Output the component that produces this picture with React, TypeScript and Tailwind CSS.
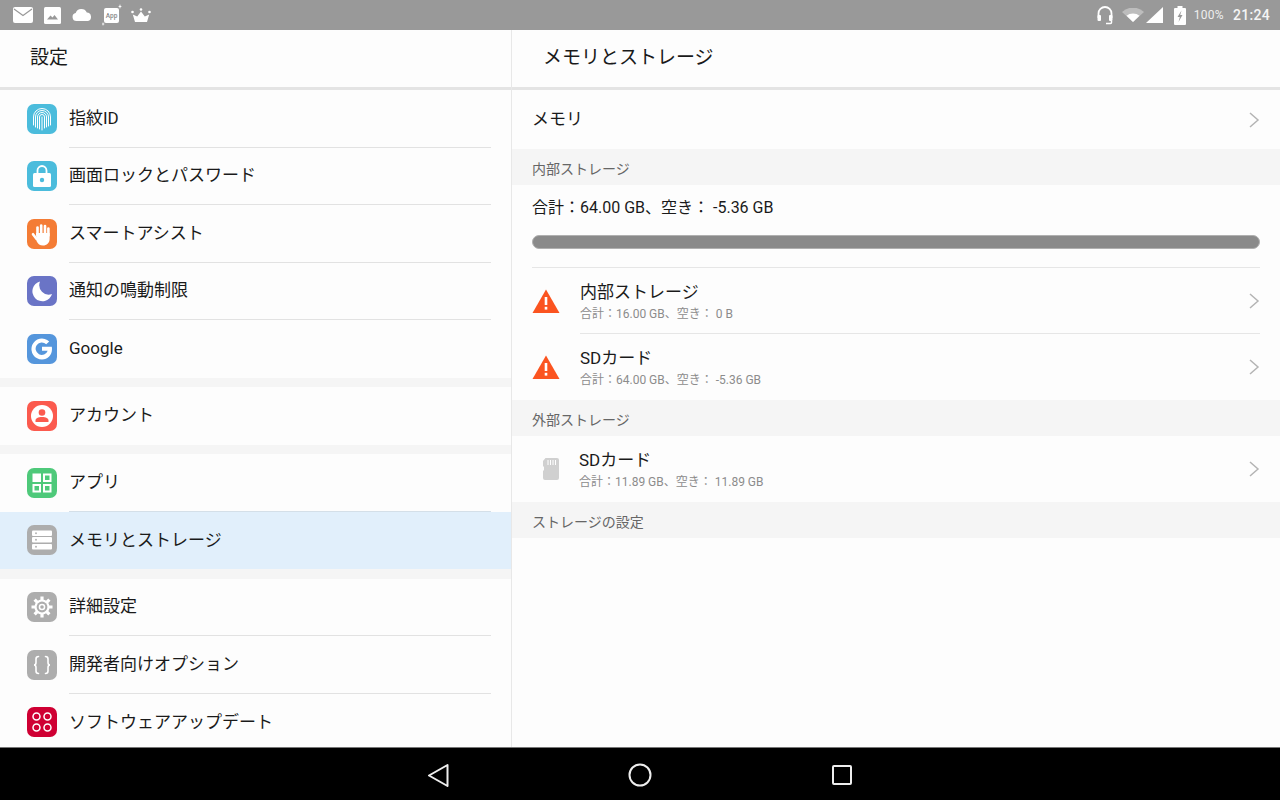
import type { ReactNode } from 'react'

const FONT = '[font-family:Roboto,"Noto_Sans_CJK_JP",sans-serif]'

const Tile = ({ bg, children }: { bg: string; children: ReactNode }) => (
  <div className={`w-[30px] h-[30px] rounded-[7px] shrink-0 ${bg}`}>
    <svg viewBox="0 0 30 30" width="30" height="30">
      {children}
    </svg>
  </div>
)

const Fingerprint = () => (
  <g fill="none" stroke="#fff" strokeWidth="1" strokeLinecap="round">
    <path d="M6.5 21V13a8.5 8.5 0 0 1 17 0v8" />
    <path d="M8.5 23V13a6.5 6.5 0 0 1 13 0v9" />
    <path d="M10.5 24V13a4.5 4.5 0 0 1 9 0v10" />
    <path d="M12.5 25V13a2.5 2.5 0 0 1 5 0v11" />
    <path d="M15 13v13" />
  </g>
)

const Lock = () => (
  <g>
    <path d="M10.5 12V9.5a4.5 4.5 0 0 1 9 0V12" fill="none" stroke="#fff" strokeWidth="1.8" />
    <rect x="6" y="12" width="18" height="14" rx="1.5" fill="#fff" />
    <circle cx="15" cy="19" r="2.2" fill="#4bbcdc" />
  </g>
)

const Hand = () => (
  <g fill="#fff">
    <g stroke="#fff" strokeWidth="2.6" strokeLinecap="round">
      <path d="M10.5 16V8.5" />
      <path d="M14.2 15V6.5" />
      <path d="M18 15V7" />
      <path d="M21.4 16.5V9.5" />
      <path d="M9.6 20L6 15.2" />
    </g>
    <path d="M9 14h13.6v6c0 4-3 6.5-6.6 6.5-3.200 0-5-1.500-6.500-4.500z" />
  </g>
)

const Moon = () => (
  <path d="M13 5.500a10 10 0 1 0 12 12.500 9.500 9.500 0 0 1-12-12.500z" fill="#fff" />
)

const GoogleG = () => (
  <path
    d="M25 15c0 6-4.200 10.500-10 10.500a10.500 10.500 0 1 1 7.200-18.100l-3 2.900a6.200 6.200 0 1 0 1.500 6.400H15v-3.900h9.800c.1.600.2 1.300.2 2.200z"
    fill="#fff"
  />
)

const Person = () => (
  <g>
    <circle cx="15" cy="15" r="11" fill="#fff" />
    <circle cx="15" cy="11.500" r="3.300" fill="#fb5a4e" />
    <path d="M8.500 21v-1.500c0-2 2.500-3.500 6.500-3.500s6.500 1.500 6.500 3.500V21z" fill="#fb5a4e" />
  </g>
)

const Apps = () => (
  <g>
    <rect x="5.500" y="5.500" width="8.500" height="8.500" fill="#fff" />
    <rect x="17" y="6.500" width="6.500" height="6.500" fill="none" stroke="#fff" strokeWidth="2" />
    <rect x="6.500" y="17" width="6.500" height="6.500" fill="none" stroke="#fff" strokeWidth="2" />
    <rect x="17" y="17" width="6.500" height="6.500" fill="none" stroke="#fff" strokeWidth="2" />
  </g>
)

const Server = () => (
  <g>
    {[5.500, 12, 19].map((y) => (
      <g key={y}>
        <rect x="5" y={y} width="20" height="5.500" rx="1" fill="#fff" />
        <circle cx="9" cy={y + 2.750} r="0.900" fill="#adadad" />
      </g>
    ))}
  </g>
)

const Gear = () => (
  <g>
    <g stroke="#fff" strokeWidth="3.200">
      <path d="M15 4.500v21M4.500 15h21M7.600 7.600l14.800 14.800M22.400 7.600L7.600 22.400" />
    </g>
    <circle cx="15" cy="15" r="7.600" fill="#fff" />
    <circle cx="15" cy="15" r="5.400" fill="#adadad" />
    <circle cx="15" cy="15" r="3.300" fill="#fff" />
    <circle cx="15" cy="15" r="1.800" fill="#adadad" />
  </g>
)

const Braces = () => (
  <g fill="none" stroke="#fff" strokeWidth="1.600" strokeLinecap="round">
    <path d="M11.500 6.500c-2 0-2.500.8-2.500 2.500v3.500c0 1.500-.6 2.500-2 2.500 1.400 0 2 1 2 2.500V21c0 1.700.5 2.500 2.500 2.500" />
    <path d="M18.500 6.500c2 0 2.500.8 2.500 2.500v3.500c0 1.500.6 2.500 2 2.500-1.400 0-2 1-2 2.500V21c0 1.700-.5 2.500-2.500 2.500" />
  </g>
)

const Dots = () => (
  <g fill="none" stroke="#fff" strokeWidth="1.500">
    <circle cx="9.500" cy="9.500" r="3.500" />
    <circle cx="20.500" cy="9.500" r="3.500" />
    <circle cx="9.500" cy="20.500" r="3.500" />
    <circle cx="20.500" cy="20.500" r="3.500" />
  </g>
)

type Item = { label: string; bg: string; icon: ReactNode; active?: boolean }

const GROUPS: Item[][] = [
  [
    { label: '指紋ID', bg: 'bg-[#4bbcdc]', icon: <Fingerprint /> },
    { label: '画面ロックとパスワード', bg: 'bg-[#4bbcdc]', icon: <Lock /> },
    { label: 'スマートアシスト', bg: 'bg-[#f47c35]', icon: <Hand /> },
    { label: '通知の鳴動制限', bg: 'bg-[#6a74c6]', icon: <Moon /> },
    { label: 'Google', bg: 'bg-[#5596dc]', icon: <GoogleG /> },
  ],
  [{ label: 'アカウント', bg: 'bg-[#fb5a4e]', icon: <Person /> }],
  [
    { label: 'アプリ', bg: 'bg-[#4ec97a]', icon: <Apps /> },
    { label: 'メモリとストレージ', bg: 'bg-[#adadad]', icon: <Server />, active: true },
  ],
  [
    { label: '詳細設定', bg: 'bg-[#adadad]', icon: <Gear /> },
    { label: '開発者向けオプション', bg: 'bg-[#adadad]', icon: <Braces /> },
    { label: 'ソフトウェアアップデート', bg: 'bg-[#cf0033]', icon: <Dots /> },
  ],
]

const Chevron = () => (
  <svg viewBox="0 0 12 18" width="12" height="18" className="shrink-0">
    <path d="M2 2l8 7-8 7" fill="none" stroke="#b4b4b4" strokeWidth="1.500" />
  </svg>
)

const Warning = () => (
  <svg viewBox="0 0 28 24" width="28" height="24" className="shrink-0">
    <path d="M14 0.500L27.500 24H0.500z" fill="#fb5420" />
    <rect x="12.700" y="8" width="2.600" height="8" fill="#fff" />
    <rect x="12.700" y="17.800" width="2.600" height="2.800" fill="#fff" />
  </svg>
)

const SdCard = () => (
  <svg viewBox="0 0 18 22" width="18" height="22" className="shrink-0">
    <path
      d="M3.500 0H15a2 2 0 0 1 2 2v18a2 2 0 0 1-2 2H3a2 2 0 0 1-2-2v-7l1-1V9L1 8V3z"
      fill="#d0d0d0"
    />
    <path d="M6 2v5M8.500 2v5M11 2v5M13.500 2v5" stroke="#fff" strokeWidth="1" />
  </svg>
)

const SectionLabel = ({ children }: { children: ReactNode }) => (
  <div className="h-9 bg-[#f5f5f5] pl-5 flex items-center text-sm text-[#666] pt-[3px]">{children}</div>
)

const StorageRow = ({
  icon,
  title,
  sub,
  textGap,
  line,
}: {
  icon: ReactNode
  title: string
  sub: string
  textGap: string
  line?: boolean
}) => (
  <div className="h-[66px] pl-5 pr-5 flex items-center relative">
    <div className={`flex items-center flex-1 ${textGap}`}>
      {icon}
      <div>
        <div className="text-[17px] leading-[24px] text-[#1a1a1a]">{title}</div>
        <div className="text-xs leading-[18px] text-[#8c8c8c] mt-[1px]">{sub}</div>
      </div>
    </div>
    <Chevron />
    {line && <div className="absolute left-[68px] right-5 bottom-0 h-px bg-[#e6e6e6]" />}
  </div>
)

export default function App() {
  return (
    <div className={`w-[1280px] h-[800px] flex flex-col overflow-hidden bg-[#fdfdfd] ${FONT}`}>
      {/* status bar */}
      <div className="h-[30px] bg-[#999] flex items-center pl-[13px] pr-[10px] shrink-0">
        <svg viewBox="0 0 20 16" width="20" height="16" className="ml-0">
          <rect width="20" height="16" rx="2" fill="#fff" />
          <path d="M1 2l9 6.500L19 2" fill="none" stroke="#999" strokeWidth="1.200" />
        </svg>
        <svg viewBox="0 0 17 17" width="17" height="17" className="ml-[11px]">
          <rect width="17" height="17" rx="1.500" fill="#fff" />
          <path d="M3 12.500l3.500-4 2 2 2-2.500 3.500 4.500z" fill="#999" />
        </svg>
        <svg viewBox="0 0 20 12" width="20" height="12" className="ml-[11px]">
          <path
            d="M4.500 12a4 4 0 0 1-.8-7.900A6 6 0 0 1 14.800 3.600 4.300 4.300 0 0 1 16 12z"
            fill="#fff"
          />
        </svg>
        <svg viewBox="0 0 20 22" width="20" height="22" className="ml-[10px]">
          <rect x="2" y="4" width="15" height="15" rx="2" fill="#fff" />
          <text x="9.500" y="14" fontSize="6.500" fontWeight="500" textAnchor="middle" fill="#888">
            App
          </text>
          <path d="M18 0l.6 1.900 1.400.6-1.400.6-.6 1.900-.6-1.900-1.400-.6 1.400-.6zM1 18l.5 1.500 1.300.5-1.300.5L1 22l-.5-1.500L0 20l.5-.5z" fill="#fff" />
        </svg>
        <svg viewBox="0 0 20 15" width="20" height="15" className="ml-[9px]">
          <path d="M4 14L1.800 6.500 6.200 8.500 10 3.500l3.800 5 4.400-2L16 14z" fill="#fff" />
          <circle cx="1.500" cy="4" r="1.300" fill="#fff" />
          <circle cx="10" cy="1.500" r="1.300" fill="#fff" />
          <circle cx="18.500" cy="4" r="1.300" fill="#fff" />
        </svg>

        <svg viewBox="0 0 18 20" width="18" height="20" className="ml-auto">
          <path d="M2.500 13V8.500a6.500 6.500 0 0 1 13 0V13" fill="none" stroke="#fff" strokeWidth="1.800" />
          <rect x="1.500" y="10" width="3.500" height="6" rx="1" fill="#fff" />
          <rect x="13" y="10" width="3.500" height="6" rx="1" fill="#fff" />
          <path d="M15.500 16v1.500a1 1 0 0 1-1 1H10" fill="none" stroke="#fff" strokeWidth="1.500" />
        </svg>
        <svg viewBox="0 0 22 14" width="22" height="14" className="ml-[8px]">
          <path d="M0 4a16 16 0 0 1 22 0L11 14z" fill="#bdbdbd" />
          <path d="M4.500 7.800a10 10 0 0 1 13 0L11 14z" fill="#fff" />
        </svg>
        <svg viewBox="0 0 18 16" width="18" height="16" className="ml-[2px]">
          <path d="M17 0v16H0z" fill="#fff" />
        </svg>
        <svg viewBox="0 0 12 19" width="12" height="19" className="ml-[10px]">
          <path d="M3.500 0h5v2H11a1 1 0 0 1 1 1v15a1 1 0 0 1-1 1H1a1 1 0 0 1-1-1V3a1 1 0 0 1 1-1h2.500z" fill="#fff" />
          <path d="M7.500 4.500L3.500 11h2.300L4.500 16l4-7H6.200z" fill="#999" />
        </svg>
        <span className="ml-[8px] text-xs tracking-[0.3px] text-[#eee]">100%</span>
        <span className="ml-[9px] text-sm font-medium tracking-[0.3px] text-[#f5f5f5]">21:24</span>
      </div>

      <div className="flex-1 flex min-h-0">
        {/* settings list */}
        <div className="w-[512px] shrink-0 border-r border-[#e8e8e8] flex flex-col overflow-hidden">
          <div className="h-[60px] shrink-0 border-b-[3px] border-[#e4e4e4] pl-[30px] flex items-center text-[19px] text-[#1a1a1a]">
            設定
          </div>
          <div className="flex flex-col gap-[9.5px] bg-[#f5f5f5]">
            {GROUPS.map((group, g) => (
              <div key={g} className="bg-[#fdfdfd]">
                {group.map((item, i) => (
                  <div
                    key={item.label}
                    className={`h-[57.5px] pl-[27px] flex items-center gap-3 ${item.active ? 'bg-[#e1effb]' : ''}`}
                  >
                    <Tile bg={item.bg}>{item.icon}</Tile>
                    <div
                      className={`flex-1 h-full flex items-center text-[17px] text-[#1a1a1a] mr-5 ${
                        i < group.length - 1 && !group[i + 1].active ? 'border-b border-[#e2e2e2]' : ''
                      } ${group[i + 1]?.active ? 'border-b border-[#d4dfe8]' : ''}`}
                    >
                      {item.label}
                    </div>
                  </div>
                ))}
              </div>
            ))}
          </div>
        </div>

        {/* storage detail */}
        <div className="flex-1 flex flex-col min-w-0">
          <div className="h-[60px] shrink-0 border-b-[3px] border-[#e4e4e4] pl-[31px] flex items-center text-[19px] text-[#1a1a1a]">
            メモリとストレージ
          </div>
          <div className="h-[59px] pl-5 pr-5 flex items-center justify-between text-[17px] text-[#1a1a1a]">
            メモリ
            <Chevron />
          </div>
          <SectionLabel>内部ストレージ</SectionLabel>
          <div className="h-[82px] px-5 pt-[11px]">
            <div className="text-base leading-6 text-[#1a1a1a]">合計：64.00 GB、空き： -5.36 GB</div>
            <div className="h-[14px] mt-[15px] rounded-full bg-[#8a8a8a] border border-[#b0b0b0]" />
          </div>
          <div className="h-px mx-5 bg-[#e6e6e6]" />
          <StorageRow
            icon={<Warning />}
            title="内部ストレージ"
            sub="合計：16.00 GB、空き： 0 B"
            textGap="gap-[20px]"
            line
          />
          <StorageRow
            icon={<Warning />}
            title="SDカード"
            sub="合計：64.00 GB、空き： -5.36 GB"
            textGap="gap-[20px]"
          />
          <SectionLabel>外部ストレージ</SectionLabel>
          <StorageRow
            icon={<div className="pl-[10px]"><SdCard /></div>}
            title="SDカード"
            sub="合計：11.89 GB、空き： 11.89 GB"
            textGap="gap-[19px]"
          />
          <SectionLabel>ストレージの設定</SectionLabel>
        </div>
      </div>

      {/* nav bar */}
      <div className="h-[53px] shrink-0 bg-black border-t border-[#777] flex items-center justify-center gap-[178px] pt-[1px]">
        <svg viewBox="0 0 24 24" width="24" height="24">
          <path d="M21.500 2L3 12.500 21.500 23z" fill="none" stroke="#eee" strokeWidth="2" strokeLinejoin="round" />
        </svg>
        <svg viewBox="0 0 24 24" width="24" height="24">
          <circle cx="12" cy="12" r="10.500" fill="none" stroke="#eee" strokeWidth="2" />
        </svg>
        <svg viewBox="0 0 24 24" width="24" height="24">
          <rect x="3" y="3" width="18" height="18" rx="1" fill="none" stroke="#eee" strokeWidth="2" />
        </svg>
      </div>
    </div>
  )
}
